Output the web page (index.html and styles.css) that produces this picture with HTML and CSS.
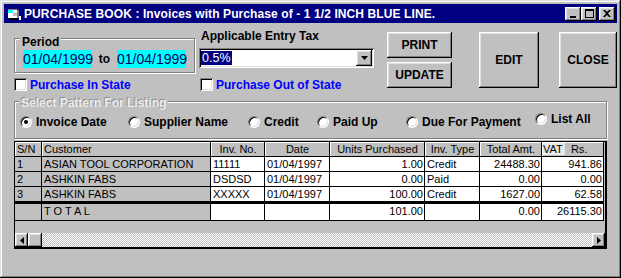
FILE: index.html
```html
<!DOCTYPE html>
<html lang="en">
<head>
  <meta charset="UTF-8">
  <title>Purchase Book</title>
  <link rel="stylesheet" href="styles.css">
</head>
<body>
  <div class="window">
    <div class="titlebar">
      <svg class="app-icon" width="14" height="14" viewBox="0 0 14 14">
        <rect x="1" y="2" width="9" height="9" fill="#fff"/>
        <rect x="1" y="2" width="5" height="4" fill="#0ff"/>
        <rect x="1" y="2" width="9" height="1" fill="#808080"/>
        <rect x="10" y="3" width="2" height="8" fill="#808080"/>
        <rect x="3" y="11" width="8" height="2" fill="#000"/>
        <rect x="6" y="6" width="4" height="3" fill="#c0c0c0"/>
        <rect x="12" y="9" width="2" height="4" fill="#fff"/>
      </svg>
      <span class="title">PURCHASE BOOK : Invoices with Purchase of - 1 1/2 INCH BLUE LINE.</span>
      <div class="cap-btns">
        <div class="cap-btn">
          <svg width="8" height="8" viewBox="0 0 8 8"><rect x="1" y="6" width="6" height="2" fill="#000"/></svg>
        </div>
        <div class="cap-btn">
          <svg width="9" height="9" viewBox="0 0 9 9"><path d="M0 0H9V9H0Z M1 2V8H8V2Z" fill="#000" fill-rule="evenodd"/></svg>
        </div>
        <div class="cap-btn cap-close">
          <svg width="8" height="7" viewBox="0 0 8 7"><path d="M0 0H2L4 2L6 0H8L5 3.5L8 7H6L4 5L2 7H0L3 3.5Z" fill="#000"/></svg>
        </div>
      </div>
    </div>

    <div class="client">
      <div class="top">
        <div class="col-period">
          <div class="group period">
            <span class="group-label">Period</span>
            <span class="date-box">01/04/1999</span>
            <span class="to">to</span>
            <span class="date-box">01/04/1999</span>
          </div>
          <div class="check">
            <span class="box"></span>Purchase In State
          </div>
        </div>

        <div class="col-tax">
          <div class="tax-label">Applicable Entry Tax</div>
          <div class="combo">
            <span class="sel">0.5%</span>
            <span class="drop">
              <svg width="7" height="4" viewBox="0 0 7 4"><path d="M0 0H7L3.5 4Z" fill="#000"/></svg>
            </span>
          </div>
          <div class="check check-out">
            <span class="box"></span>Purchase Out of State
          </div>
        </div>

        <div class="small-btns">
          <div class="btn small">PRINT</div>
          <div class="btn small">UPDATE</div>
        </div>
        <div class="btn big edit">EDIT</div>
        <div class="btn big close">CLOSE</div>
      </div>

      <div class="group pattern">
        <span class="group-label etched">Select Pattern For Listing</span>
        <div class="radios">
          <div class="opt"><span class="radio on"></span>Invoice Date</div>
          <div class="opt"><span class="radio"></span>Supplier Name</div>
          <div class="opt"><span class="radio"></span>Credit</div>
          <div class="opt"><span class="radio"></span>Paid Up</div>
          <div class="opt"><span class="radio"></span>Due For Payment</div>
          <div class="opt up"><span class="radio"></span>List All</div>
        </div>
      </div>

      <div class="grid">
        <div class="cells">
          <div class="h">S/N</div>
          <div class="h">Customer</div>
          <div class="h c">Inv. No.</div>
          <div class="h c">Date</div>
          <div class="h c">Units Purchased</div>
          <div class="h c">Inv. Type</div>
          <div class="h c">Total Amt.</div>
          <div class="h vat-head"><span class="vat">VAT</span>&nbsp;&nbsp;Rs.</div>

          <div class="f">1</div>
          <div class="f">ASIAN TOOL CORPORATION</div>
          <div class="d">11111</div>
          <div class="d">01/04/1997</div>
          <div class="d r">1.00</div>
          <div class="d">Credit</div>
          <div class="d r">24488.30</div>
          <div class="d r">941.86</div>

          <div class="f">2</div>
          <div class="f">ASHKIN FABS</div>
          <div class="d">DSDSD</div>
          <div class="d">01/04/1997</div>
          <div class="d r">0.00</div>
          <div class="d">Paid</div>
          <div class="d r">0.00</div>
          <div class="d r">0.00</div>

          <div class="f last">3</div>
          <div class="f last">ASHKIN FABS</div>
          <div class="d last">XXXXX</div>
          <div class="d last">01/04/1997</div>
          <div class="d last r">100.00</div>
          <div class="d last">Credit</div>
          <div class="d last r">1627.00</div>
          <div class="d last r">62.58</div>

          <div class="f tot"></div>
          <div class="f tot">T O T A L</div>
          <div class="d tot"></div>
          <div class="d tot"></div>
          <div class="d tot r">101.00</div>
          <div class="d tot"></div>
          <div class="d tot r">0.00</div>
          <div class="d tot r">26115.30</div>
        </div>
        <div class="grid-empty"></div>
        <div class="hscroll">
          <div class="sb-btn">
            <svg width="4" height="7" viewBox="0 0 4 7"><path d="M4 0V7L0 3.5Z" fill="#000"/></svg>
          </div>
          <div class="thumb"></div>
          <div class="track"></div>
          <div class="sb-btn">
            <svg width="4" height="7" viewBox="0 0 4 7"><path d="M0 0V7L4 3.5Z" fill="#000"/></svg>
          </div>
        </div>
      </div>
    </div>
  </div>
</body>
</html>
```

FILE: styles.css
```css
body {
  margin: 0;
  font-family: "Liberation Sans", Arial, sans-serif;
  font-size: 12px;
  background: #c0c0c0;
}
.window {
  width: 621px;
  height: 278px;
  box-sizing: border-box;
  padding: 4px;
  background: #c0c0c0;
  box-shadow: inset -1px -1px #000, inset 1px 1px #dfdfdf, inset -2px -2px #808080, inset 2px 2px #fff;
  display: flex;
  flex-direction: column;
}
.titlebar {
  height: 19px;
  background: #000080;
  color: #fff;
  display: flex;
  align-items: center;
  padding: 0 2px 0 3px;
}
.app-icon {
  margin-right: 3px;
  flex: none;
}
.title {
  flex: 1;
  font-weight: bold;
  letter-spacing: 0.1px;
  white-space: nowrap;
}
.cap-btns {
  display: flex;
}
.cap-btn {
  width: 16px;
  height: 14px;
  background: #c0c0c0;
  box-shadow: inset -1px -1px #000, inset 1px 1px #fff, inset -2px -2px #808080, inset 2px 2px #dfdfdf;
  display: flex;
  align-items: center;
  justify-content: center;
}
.cap-close {
  margin-left: 2px;
}

/* raised / sunken helpers */
.btn, .drop, .sb-btn, .thumb {
  background: #c0c0c0;
  box-shadow: inset -1px -1px #000, inset 1px 1px #fff, inset -2px -2px #808080, inset 2px 2px #dfdfdf;
}
.box, .combo {
  background: #fff;
  box-shadow: inset 1px 1px #808080, inset -1px -1px #fff, inset 2px 2px #000, inset -2px -2px #dfdfdf;
}

.top {
  display: flex;
  align-items: flex-start;
  padding-left: 10px;
}
.group {
  position: relative;
  box-sizing: border-box;
  border: 1px solid #808080;
  box-shadow: inset 1px 1px #fff, 1px 1px #fff;
}
.group-label {
  position: absolute;
  top: -4px;
  left: 5px;
  padding: 0 2px;
  background: #c0c0c0;
  font-weight: bold;
  line-height: 14px;
}
.col-period {
  width: 181px;
  margin-top: 15px;
}
.period {
  height: 35px;
  display: flex;
  align-items: flex-start;
  padding: 11px 0 0 8px;
}
.date-box {
  width: 69px;
  height: 18px;
  background: #0ff;
  color: #000060;
  font-size: 14px;
  line-height: 18px;
  text-align: center;
}
.to {
  width: 25px;
  text-align: center;
  font-weight: bold;
  line-height: 18px;
}
.check {
  display: flex;
  align-items: center;
  height: 13px;
  margin-top: 5px;
  color: #00f;
  font-weight: bold;
  white-space: nowrap;
}
.box {
  width: 13px;
  height: 13px;
  margin-right: 3px;
  flex: none;
}
.col-tax {
  width: 175px;
  margin-left: 4px;
}
.tax-label {
  margin-top: 6px;
  padding-left: 2px;
  font-weight: bold;
  line-height: 14px;
}
.combo {
  margin-top: 5px;
  height: 20px;
  box-sizing: border-box;
  padding: 2px;
  display: flex;
  align-items: center;
}
.sel {
  background: #000080;
  color: #fff;
  font-size: 12.5px;
  line-height: 14px;
  padding: 0 1px;
}
.drop {
  margin-left: auto;
  width: 16px;
  height: 16px;
  display: flex;
  align-items: center;
  justify-content: center;
}
.check-out {
  margin-top: 10px;
  margin-left: 1px;
}
.small-btns {
  margin-left: 13px;
  margin-top: 9px;
  display: flex;
  flex-direction: column;
  gap: 4px;
}
.btn {
  display: flex;
  align-items: center;
  justify-content: center;
  font-weight: bold;
}
.btn.small {
  width: 65px;
  height: 26px;
}
.btn.big {
  margin-top: 9px;
  height: 56px;
}
.edit {
  margin-left: 27px;
  width: 60px;
}
.close {
  margin-left: 20px;
  width: 58px;
}

.pattern {
  margin: 10px 0 0 10px;
  width: 593px;
  height: 38px;
}
.etched {
  top: -6px;
  left: 4px;
  color: #ececec;
  text-shadow: -1px -1px 0 #909090;
}
.radios {
  display: flex;
  align-items: center;
  height: 14px;
  margin-top: 13px;
  padding-left: 5px;
}
.opt {
  display: flex;
  align-items: center;
  font-weight: bold;
  white-space: nowrap;
}
.opt:nth-child(1) { width: 108px; }
.opt:nth-child(2) { width: 120px; }
.opt:nth-child(3) { width: 69px; }
.opt:nth-child(4) { width: 89px; }
.opt:nth-child(5) { width: 129px; }
.opt.up {
  margin-bottom: 6px;
}
.radio {
  position: relative;
  width: 12px;
  height: 12px;
  margin-right: 4px;
  flex: none;
  box-sizing: border-box;
  border-radius: 50%;
  background: #fff;
  border: 1px solid;
  border-color: #808080 #fff #fff #808080;
  box-shadow: inset 1px 1px #000, inset -1px -1px #dfdfdf;
}
.radio.on::after {
  content: "";
  position: absolute;
  left: 3px;
  top: 3px;
  width: 4px;
  height: 4px;
  border-radius: 50%;
  background: #000;
}

.grid {
  margin: 2px 0 0 10px;
  width: 593px;
  box-sizing: border-box;
  border-style: solid;
  border-color: #000;
  border-width: 1px 2px 2px 1px;
  background: #c0c0c0;
}
.cells {
  display: grid;
  grid-template-columns: 27px 169px 54px 65px 95px 55px 62px 62px;
  grid-template-rows: 15px 15px 15px 17px 17px;
  font-size: 11px;
  line-height: 14px;
}
.cells > div {
  box-sizing: border-box;
  border-right: 1px solid;
  border-bottom: 1px solid;
  padding: 0 1px 0 2px;
  white-space: nowrap;
  overflow: hidden;
}
.h {
  background: #c0c0c0;
  border-color: #000;
  box-shadow: inset 1px 1px #fff;
}
.f {
  background: #c0c0c0;
  border-color: #000;
}
.d {
  background: #fff;
  border-color: #c0c0c0;
}
.c {
  text-align: center;
}
.r {
  text-align: right;
}
.cells > .last {
  border-bottom-width: 3px;
}
.cells > .tot {
  border-bottom-color: #000;
}
.cells > .vat-head {
  padding-left: 1px;
}
.vat {
  background: #e8e8e8;
  padding-right: 2px;
}
.grid-empty {
  height: 12px;
}
.hscroll {
  display: flex;
  height: 14px;
}
.sb-btn {
  width: 13px;
  display: flex;
  align-items: center;
  justify-content: center;
}
.thumb {
  width: 14px;
}
.track {
  flex: 1;
  background: repeating-conic-gradient(#fff 0 25%, #c0c0c0 0 50%) 0 0 / 2px 2px;
}
```
